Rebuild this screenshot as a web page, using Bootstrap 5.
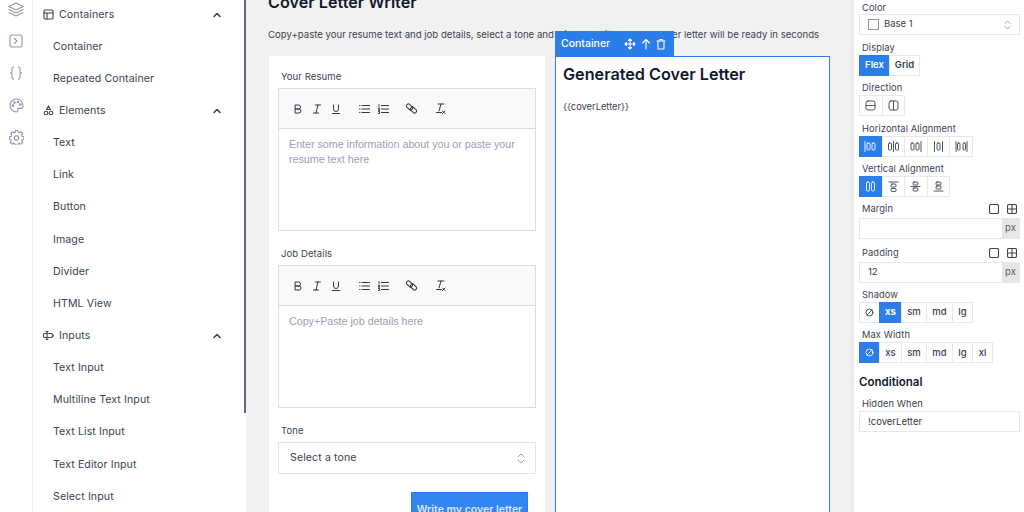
<!DOCTYPE html>
<html lang="en">
<head>
<meta charset="UTF-8">
<meta name="viewport" content="width=device-width, initial-scale=1.0">
<title>Cover Letter Writer</title>
<link rel="stylesheet" href="https://cdn.jsdelivr.net/npm/bootstrap@5.3.0/dist/css/bootstrap.min.css">
<style>
html, body { height: 100%; overflow: hidden; }
body { font-family: Inter, "Liberation Sans", sans-serif; font-size: 11px; color: #2d3648; background: #f1f1f1; }
svg { display: block; fill: none; stroke: currentColor; stroke-width: 1.1; stroke-linecap: round; stroke-linejoin: round; flex-shrink: 0; }
.app-shell { width: 1024px; height: 512px; overflow: hidden; }
.icon-rail { width: 32px; background: #fff; color: #8f97a8; }
.rail-item { height: 32.1px; }
.rail-first { margin-top: -7px; }
.widget-side { width: 214px; background: #fff; position: relative; border-left: 1px solid #f3f3f3; margin-top: -1.5px; }
.side-scroll { position: absolute; right: 0; top: 0; width: 2px; height: 414px; background: #5f6880; }
.side-row { height: 32.15px; padding-left: 20px; color: #3b4354; font-size: 10.6px; letter-spacing: .1px; flex-shrink: 0; }
.side-head { padding-left: 10px; padding-right: 24px; gap: 5px; }
.side-head .head-name { flex: 1; }
.chev-icon { stroke-width: 1.6; }
.canvas-area { width: 608px; padding: 0 0 0 22px; margin-top: -10px; }
.page-title { font-size: 16.2px; font-weight: 600; color: #111a2c; line-height: 24px; margin: 0; }
.page-sub { font-size: 9.6px; line-height: 16px; margin: 13px 0 13px; color: #3b4354; white-space: nowrap; }
.col-pair { gap: 10px; align-items: flex-start; }
.form-box { width: 276px; height: 470px; background: #fff; padding: 14px 9px 0; margin-left: 1px; }
.out-box { width: 275px; height: 470px; background: #fff; border: 1px solid #2b7de9; position: relative; padding: 6px 7px; }
.sel-tab { position: absolute; left: -1px; top: -26px; width: 119px; height: 25px; background: #2b7de9; color: #fff; padding: 0 8px 0 6px; gap: 5px; font-size: 10.5px; font-weight: 500; }
.out-title { font-size: 16.2px; font-weight: 600; line-height: 22px; color: #111a2c; margin-bottom: 16px; }
.out-ref { font-size: 9.3px; line-height: 12px; color: #3b4354; }
.field-label { font-size: 9.5px; line-height: 14px; color: #3b4354; padding-left: 3px; margin-bottom: 4px; letter-spacing: .1px; }
.rich-box { border: 1px solid #dcdcdc; height: 143px; margin-bottom: 16px; }
.rich-tools { height: 40px; background: #fafafa; border-bottom: 1px solid #dcdcdc; color: #2d3648; padding-left: 14px; }
.rich-tools svg { stroke-width: 1; }
.gap-i { margin-left: 9px; }
.gap-list { margin-left: 18px; }
.gap-ol { margin-left: 8px; }
.gap-link { margin-left: 16px; }
.gap-clear { margin-left: 17px; }
.rich-body { padding: 8px 10px; font-size: 10.7px; line-height: 15px; color: #9aa1b0; font-family: "Liberation Sans", Arial, sans-serif; }
.tone-select { height: 32px; border: 1px solid #e4e4e4; padding: 0 10px 0 11px; font-size: 10.6px; color: #3b4354; letter-spacing: .1px; }
.updown { color: #8f97a8; stroke-width: .9; }
.write-btn { width: 117px; height: 32px; background: #3385f0; border: 1px solid #2b7de9; border-radius: 0; color: #dce9fb; font-size: 10.5px; font-weight: 600; padding: 3px 0 0; margin: 18px 8px 0 auto; display: block; }
.prop-side { width: 170px; background: #fff; padding: 0 4px 0 5px; box-shadow: -4px 0 0 #eaeaea; }
.prop-label { font-size: 9.3px; line-height: 13px; color: #3b4354; padding-left: 3px; margin-bottom: 1px; letter-spacing: .1px; }
.prop-first { margin-top: 1px; margin-bottom: 0; }
.prop-sel { height: 21px; border: 1px solid #e8e8e8; padding: 0 8px; gap: 5px; font-size: 9.5px; color: #3b4354; margin-bottom: 6px; }
.swatch { width: 11px; height: 11px; border: 1px solid #8f97a8; }
.seg-row { display: flex; margin-bottom: 5.33px; }
.seg-btn { height: 21px; width: 23.6px; background: #fff; border: 1px solid #e8e8e8; margin-left: -1px; display: flex; align-items: center; justify-content: center; font-size: 9.5px; font-weight: 500; color: #3b4354; }
.seg-btn:first-child { margin-left: 0; }
.seg-btn svg { stroke-width: .9; }
.seg-on { background: #2b7de9; border-color: #2b7de9; color: #fff; font-weight: 700; }
.w-disp { width: 31px; font-weight: 600; }
.w-none { width: 21px; }
.w-xs { width: 23px; }
.w-sm { width: 26px; }
.w-md { width: 27px; }
.w-lg { width: 21px; }
.prop-input { height: 21px; border: 1px solid #e8e8e8; display: flex; font-size: 9.5px; }
.prop-input .in-val { flex: 1; padding: 0 8px; display: flex; align-items: center; }
.prop-input .in-unit { width: 17px; background: #e6e6e6; color: #565e6e; display: flex; align-items: center; justify-content: center; }
.label-line { display: flex; align-items: center; justify-content: space-between; padding-right: 3px; margin-top: 8px; margin-bottom: 3px; height: 12px; color: #3b4354; }
.label-line .prop-label { margin: 0; }
.label-top { margin-top: 6px; }
.shadow-label { margin-top: 5px; }
.prop-head { font-size: 11.5px; font-weight: 600; color: #111a2c; margin: 12px 0 8px; line-height: 14px; }
</style>
</head>
<body>
<div class="app-shell d-flex">
  <!-- left icon rail -->
  <div class="icon-rail d-flex flex-column">
    <div class="rail-item rail-first d-flex align-items-center justify-content-center">
      <svg width="16" height="16" viewBox="0 0 16 16"><path d="M8 2 15 5.500 8 9 1 5.500zM1 8.500 8 12l7-3.500M1 11.500 8 15l7-3.500"/></svg></div>
    <div class="rail-item d-flex align-items-center justify-content-center">
      <svg width="14" height="14" viewBox="0 0 14 14"><rect x="1" y="1" width="12" height="12" rx="1.500"/><path d="m5.500 4.500 2.500 2.500-2.500 2.500"/></svg></div>
    <div class="rail-item d-flex align-items-center justify-content-center">
      <svg width="14" height="14" viewBox="0 0 14 14"><path d="M4.500 1C3 1 3 2 3 3v2.500C3 6.500 2 7 1.500 7 2 7 3 7.500 3 8.500V11c0 1 0 2 1.500 2M9.500 1C11 1 11 2 11 3v2.500c0 1 1 1.500 1.500 1.500-.5 0-1.500.5-1.500 1.500V11c0 1 0 2-1.500 2"/></svg></div>
    <div class="rail-item d-flex align-items-center justify-content-center">
      <svg width="15" height="15" viewBox="0 0 15 15"><path d="M7.500 1C3.500 1 1 3.800 1 7.200 1 11 4 14 7.500 14c1.200 0 1.500-.8 1.200-1.600-.4-1 .1-2 1.300-2h2c1.300 0 2-1 2-2.200C14 4 11.500 1 7.500 1z"/><circle cx="4" cy="7.500" r=".8"/><circle cx="5.500" cy="4.500" r=".8"/><circle cx="9" cy="4" r=".8"/><circle cx="11.300" cy="6.500" r=".8"/></svg></div>
    <div class="rail-item d-flex align-items-center justify-content-center">
      <svg width="15" height="15" viewBox="0 0 15 15"><path d="M6.300 1h2.400l.4 1.800 1.300.6 1.600-1 1.700 1.700-1 1.600.6 1.300 1.700.4v2.400l-1.700.4-.6 1.300 1 1.600-1.700 1.700-1.600-1-1.300.6-.4 1.600H6.300l-.4-1.600-1.300-.6-1.600 1-1.700-1.700 1-1.600-.6-1.300L.5 9.800V7.400l1.700-.4.6-1.300-1-1.600 1.700-1.700 1.600 1 1.300-.6z" transform="translate(0 -.6)"/><circle cx="7.500" cy="7.900" r="2.200"/></svg></div>
  </div>

  <!-- widget list -->
  <div class="widget-side d-flex flex-column">
    <div class="side-scroll"></div>
    <div class="side-row side-head d-flex align-items-center"><svg width="11" height="11" viewBox="0 0 11 11"><rect x="1" y="1" width="9" height="9" rx="1"/><path d="M1 4h9M4 4v6"/></svg><span class="head-name">Containers</span><svg class="chev-icon" width="10" height="10" viewBox="0 0 10 10"><path d="m2 6.500 3-3 3 3"/></svg></div>
    <div class="side-row d-flex align-items-center">Container</div>
    <div class="side-row d-flex align-items-center">Repeated Container</div>
    <div class="side-row side-head d-flex align-items-center"><svg width="11" height="11" viewBox="0 0 11 11"><path d="M5.500 1 7.500 4.500h-4z"/><circle cx="3" cy="8" r="1.800"/><circle cx="8" cy="8" r="1.800"/></svg><span class="head-name">Elements</span><svg class="chev-icon" width="10" height="10" viewBox="0 0 10 10"><path d="m2 6.500 3-3 3 3"/></svg></div>
    <div class="side-row d-flex align-items-center">Text</div>
    <div class="side-row d-flex align-items-center">Link</div>
    <div class="side-row d-flex align-items-center">Button</div>
    <div class="side-row d-flex align-items-center">Image</div>
    <div class="side-row d-flex align-items-center">Divider</div>
    <div class="side-row d-flex align-items-center">HTML View</div>
    <div class="side-row side-head d-flex align-items-center"><svg width="11" height="11" viewBox="0 0 11 11"><path d="M4 1.500v8M3 1.500h2M3 9.500h2M3 3.500H1.500c-.5 0-1 .5-1 1v2c0 .5.5 1 1 1H3M5 3.500h3.500l2 2-2 2H5"/></svg><span class="head-name">Inputs</span><svg class="chev-icon" width="10" height="10" viewBox="0 0 10 10"><path d="m2 6.500 3-3 3 3"/></svg></div>
    <div class="side-row d-flex align-items-center">Text Input</div>
    <div class="side-row d-flex align-items-center">Multiline Text Input</div>
    <div class="side-row d-flex align-items-center">Text List Input</div>
    <div class="side-row d-flex align-items-center">Text Editor Input</div>
    <div class="side-row d-flex align-items-center">Select Input</div>
  </div>

  <!-- canvas -->
  <div class="canvas-area">
    <h1 class="page-title">Cover Letter Writer</h1>
    <p class="page-sub">Copy+paste your resume text and job details, select a tone and click submit and your cover letter will be ready in seconds</p>
    <div class="col-pair d-flex">
      <div class="form-box">
        <div class="field-label">Your Resume</div>
        <div class="rich-box">
          <div class="rich-tools d-flex align-items-center">
            <svg width="10" height="10" viewBox="0 0 10 10"><path d="M2.500 1h3a2 2 0 0 1 0 4h-3zM2.500 5h3.500a2 2 0 0 1 0 4H2.500z"/></svg>
            <svg class="gap-i" width="10" height="10" viewBox="0 0 10 10"><path d="M3.500 1h5M1.500 9h5M6 1 4 9"/></svg>
            <svg class="gap-i" width="10" height="10" viewBox="0 0 10 10"><path d="M2.500 1v4a2.500 2.500 0 0 0 5 0V1M1.500 9.500h7"/></svg>
            <svg class="gap-list" width="11" height="10" viewBox="0 0 11 10"><path d="M3 1.500h7.500M3 5h7.500M3 8.500h7.500M.6 1.500h.4M.6 5h.4M.6 8.500h.4"/></svg>
            <svg class="gap-ol" width="11" height="10" viewBox="0 0 11 10"><path d="M3.500 1.500h7M3.500 5h7M3.500 8.500h7M1 .6v1.800M.4 4.200h1.200v1.200H.4v.9h1.200M.4 7.600h1.200v1.800H.4"/></svg>
            <svg class="gap-link" width="13" height="13" viewBox="0 0 13 13"><rect x="1" y="3" width="7" height="4" rx="2" transform="rotate(45 4.500 5)"/><rect x="5" y="6" width="7" height="4" rx="2" transform="rotate(45 8.500 8)"/></svg>
            <svg class="gap-clear" width="11" height="11" viewBox="0 0 11 11"><path d="M3 1h6M6 1 4 8M1.500 9.500h5M7.500 8 10 10.500M10 8l-2.500 2.500"/></svg>
          </div>
          <div class="rich-body">Enter some information about you or paste your resume text here</div>
        </div>
        <div class="field-label">Job Details</div>
        <div class="rich-box">
          <div class="rich-tools d-flex align-items-center">
            <svg width="10" height="10" viewBox="0 0 10 10"><path d="M2.500 1h3a2 2 0 0 1 0 4h-3zM2.500 5h3.500a2 2 0 0 1 0 4H2.500z"/></svg>
            <svg class="gap-i" width="10" height="10" viewBox="0 0 10 10"><path d="M3.500 1h5M1.500 9h5M6 1 4 9"/></svg>
            <svg class="gap-i" width="10" height="10" viewBox="0 0 10 10"><path d="M2.500 1v4a2.500 2.500 0 0 0 5 0V1M1.500 9.500h7"/></svg>
            <svg class="gap-list" width="11" height="10" viewBox="0 0 11 10"><path d="M3 1.500h7.500M3 5h7.500M3 8.500h7.500M.6 1.500h.4M.6 5h.4M.6 8.500h.4"/></svg>
            <svg class="gap-ol" width="11" height="10" viewBox="0 0 11 10"><path d="M3.500 1.500h7M3.500 5h7M3.500 8.500h7M1 .6v1.800M.4 4.200h1.200v1.200H.4v.9h1.200M.4 7.600h1.200v1.800H.4"/></svg>
            <svg class="gap-link" width="13" height="13" viewBox="0 0 13 13"><rect x="1" y="3" width="7" height="4" rx="2" transform="rotate(45 4.500 5)"/><rect x="5" y="6" width="7" height="4" rx="2" transform="rotate(45 8.500 8)"/></svg>
            <svg class="gap-clear" width="11" height="11" viewBox="0 0 11 11"><path d="M3 1h6M6 1 4 8M1.500 9.500h5M7.500 8 10 10.500M10 8l-2.500 2.500"/></svg>
          </div>
          <div class="rich-body">Copy+Paste job details here</div>
        </div>
        <div class="field-label">Tone</div>
        <div class="tone-select d-flex align-items-center justify-content-between">Select a tone
          <svg class="updown" width="8" height="11" viewBox="0 0 8 11"><path d="m1 4 3-3 3 3M1 7l3 3 3-3"/></svg></div>
        <button class="write-btn" type="button">Write my cover letter</button>
      </div>
      <div class="out-box">
        <div class="sel-tab d-flex align-items-center"><span class="me-auto">Container</span>
          <svg width="12" height="12" viewBox="0 0 12 12"><path d="M6 1v10M1 6h10M4.500 2.500 6 1l1.500 1.500M4.500 9.500 6 11l1.500-1.500M2.500 4.500 1 6l1.500 1.500M9.500 4.500 11 6 9.500 7.500"/></svg>
          <svg width="10" height="12" viewBox="0 0 10 12"><path d="M5 11V1.500M1.500 5 5 1.500 8.500 5"/></svg>
          <svg width="10" height="12" viewBox="0 0 10 12"><path d="M1 3h8M3.500 3V1.500h3V3M2 3v7.500c0 .3.200.5.500.5h5c.3 0 .5-.2.500-.5V3"/></svg>
        </div>
        <div class="out-title">Generated Cover Letter</div>
        <div class="out-ref">{{coverLetter}}</div>
      </div>
    </div>
  </div>

  <!-- properties -->
  <div class="prop-side">
    <div class="prop-label prop-first">Color</div>
    <div class="prop-sel d-flex align-items-center"><span class="swatch"></span><span class="me-auto">Base 1</span><svg class="updown" width="7" height="10" viewBox="0 0 7 10"><path d="m1 3.500 2.500-2.500L6 3.500M1 6.500 3.500 9 6 6.500"/></svg></div>
    <div class="prop-label">Display</div>
    <div class="seg-row"><div class="seg-btn seg-on w-disp">Flex</div><div class="seg-btn w-disp">Grid</div></div>
    <div class="prop-label">Direction</div>
    <div class="seg-row"><div class="seg-btn"><svg width="11" height="11" viewBox="0 0 11 11"><rect x="1" y="1" width="9" height="9" rx="2"/><path d="M1 5.500h9"/></svg></div><div class="seg-btn"><svg width="11" height="11" viewBox="0 0 11 11"><rect x="1" y="1" width="9" height="9" rx="2"/><path d="M5.500 1v9"/></svg></div></div>
    <div class="prop-label">Horizontal Alignment</div>
    <div class="seg-row">
      <div class="seg-btn seg-on"><svg width="13" height="11" viewBox="0 0 13 11"><path d="M1 .5v10"/><rect x="3" y="2" width="3" height="7" rx="1"/><rect x="8" y="2" width="3" height="7" rx="1"/></svg></div>
      <div class="seg-btn"><svg width="13" height="11" viewBox="0 0 13 11"><path d="M6.500 .5v10"/><rect x="1.500" y="2" width="3" height="7" rx="1"/><rect x="8.500" y="2" width="3" height="7" rx="1"/></svg></div>
      <div class="seg-btn"><svg width="13" height="11" viewBox="0 0 13 11"><path d="M12 .5v10"/><rect x="2" y="2" width="3" height="7" rx="1"/><rect x="7" y="2" width="3" height="7" rx="1"/></svg></div>
      <div class="seg-btn"><svg width="13" height="11" viewBox="0 0 13 11"><path d="M2.500 .5v10M10.500 .5v10"/><rect x="5" y="2" width="3" height="7" rx="1"/></svg></div>
      <div class="seg-btn"><svg width="13" height="11" viewBox="0 0 13 11"><path d="M1 .5v10M12 .5v10"/><rect x="2.500" y="2" width="2.500" height="7" rx="1"/><rect x="8" y="2" width="2.500" height="7" rx="1"/></svg></div>
    </div>
    <div class="prop-label">Vertical Alignment</div>
    <div class="seg-row">
      <div class="seg-btn seg-on"><svg width="11" height="11" viewBox="0 0 11 11"><rect x="1.500" y="1" width="3" height="9" rx="1.200"/><rect x="6.500" y="1" width="3" height="9" rx="1.200"/></svg></div>
      <div class="seg-btn"><svg width="11" height="11" viewBox="0 0 11 11"><path d="M1 1h9"/><rect x="3" y="3" width="5" height="3" rx="1"/><rect x="3" y="7.500" width="5" height="3" rx="1"/></svg></div>
      <div class="seg-btn"><svg width="11" height="11" viewBox="0 0 11 11"><path d="M1 5.500h9"/><rect x="3" y="1" width="5" height="3" rx="1"/><rect x="3" y="7" width="5" height="3" rx="1"/></svg></div>
      <div class="seg-btn"><svg width="11" height="11" viewBox="0 0 11 11"><path d="M1 10h9"/><rect x="3" y="1" width="5" height="3" rx="1"/><rect x="3" y="5" width="5" height="3" rx="1"/></svg></div>
    </div>
    <div class="label-line label-top"><span class="prop-label">Margin</span><span class="d-flex gap-2"><svg width="10" height="10" viewBox="0 0 10 10"><rect x=".5" y=".5" width="9" height="9" rx="1.500"/></svg><svg width="10" height="10" viewBox="0 0 10 10"><rect x=".5" y=".5" width="9" height="9" rx="1.500"/><path d="M5 .5v9M.5 5h9"/></svg></span></div>
    <div class="prop-input"><div class="in-val"></div><div class="in-unit">px</div></div>
    <div class="label-line"><span class="prop-label">Padding</span><span class="d-flex gap-2"><svg width="10" height="10" viewBox="0 0 10 10"><rect x=".5" y=".5" width="9" height="9" rx="1.500"/></svg><svg width="10" height="10" viewBox="0 0 10 10"><rect x=".5" y=".5" width="9" height="9" rx="1.500"/><path d="M5 .5v9M.5 5h9"/></svg></span></div>
    <div class="prop-input"><div class="in-val">12</div><div class="in-unit">px</div></div>
    <div class="prop-label shadow-label">Shadow</div>
    <div class="seg-row">
      <div class="seg-btn w-none"><svg width="9" height="9" viewBox="0 0 9 9"><circle cx="4.500" cy="4.500" r="3.500"/><path d="M2 7l5-5"/></svg></div>
      <div class="seg-btn seg-on w-xs">xs</div><div class="seg-btn w-sm">sm</div><div class="seg-btn w-md">md</div><div class="seg-btn w-lg">lg</div>
    </div>
    <div class="prop-label">Max Width</div>
    <div class="seg-row">
      <div class="seg-btn seg-on w-none"><svg width="9" height="9" viewBox="0 0 9 9"><circle cx="4.500" cy="4.500" r="3.500"/><path d="M2 7l5-5"/></svg></div>
      <div class="seg-btn w-xs">xs</div><div class="seg-btn w-sm">sm</div><div class="seg-btn w-md">md</div><div class="seg-btn w-lg">lg</div><div class="seg-btn w-lg">xl</div>
    </div>
    <div class="prop-head">Conditional</div>
    <div class="prop-label">Hidden When</div>
    <div class="prop-input"><div class="in-val">!coverLetter</div></div>
  </div>
</div>
<script src="https://cdn.jsdelivr.net/npm/bootstrap@5.3.0/dist/js/bootstrap.bundle.min.js"></script>
</body>
</html>
